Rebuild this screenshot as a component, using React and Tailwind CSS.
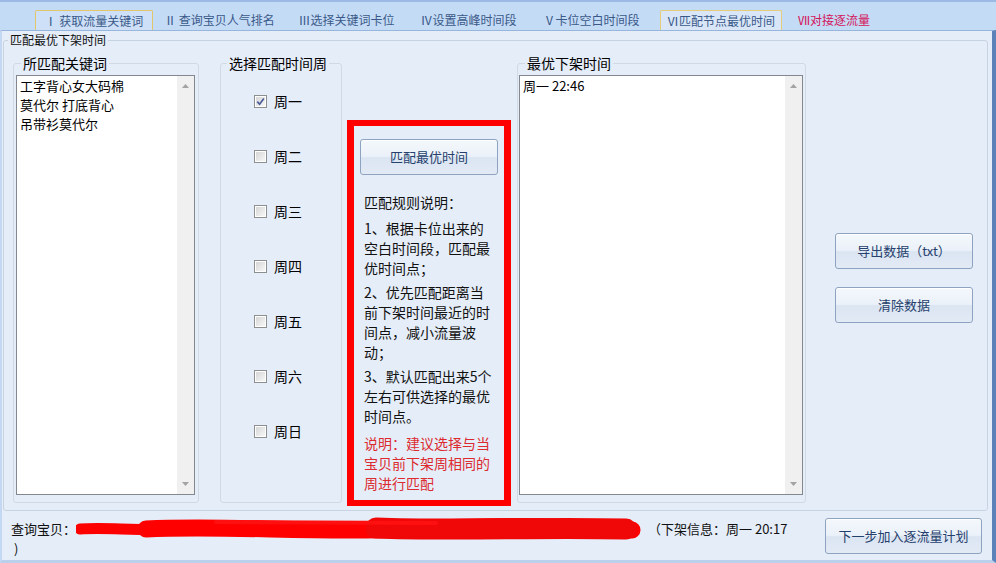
import React from 'react';

const TABS = [
  { label: 'Ⅰ 获取流量关键词', cls: 'w-[118px] border border-b-0 border-[#e2c66c] bg-[#cde0f7] rounded-t-[2px]' },
  { label: 'Ⅱ 查询宝贝人气排名', cls: 'w-[133px]' },
  { label: 'Ⅲ选择关键词卡位', cls: 'w-[121px]' },
  { label: 'Ⅳ设置高峰时间段', cls: 'w-[123px]' },
  { label: 'Ⅴ卡位空白时间段', cls: 'w-[123px]' },
  { label: 'Ⅵ匹配节点最优时间', cls: 'ml-[7px] w-[122px] border border-b-0 border-[#e4cc78] bg-[#d8e6f8] rounded-t-[2px]' },
  { label: 'Ⅶ对接逐流量', cls: 'w-[110px] justify-start pl-[16px] text-[#d3145a]' },
];

const DAYS = ['周一', '周二', '周三', '周四', '周五', '周六', '周日'];

function WinButton({ children, className = '' }) {
  return (
    <button className={`shrink-0 flex items-center justify-center rounded-[3px] border border-[#8ea3bf] bg-[linear-gradient(to_bottom,#f4f8fc_0%,#ebf1f9_48%,#dbe5f2_52%,#e2eaf5_100%)] shadow-[inset_0_1px_0_#ffffff] text-[13px] text-[#25406c] ${className}`}>
      {children}
    </button>
  );
}

function Scrollbar() {
  return (
    <div className="w-[17px] h-full bg-[#f0f0f0] flex flex-col items-center justify-between py-[8px]">
      <svg width="7" height="4" viewBox="0 0 7 4"><path d="M0 4 L3.5 0 L7 4 Z" fill="#a3a3a3" /></svg>
      <svg width="7" height="4" viewBox="0 0 7 4"><path d="M0 0 L3.5 4 L7 0 Z" fill="#a3a3a3" /></svg>
    </div>
  );
}

function ListBox({ items, className = '' }) {
  return (
    <div className={`mt-[5px] h-[420px] border border-[#828790] bg-white flex ${className}`}>
      <div className="flex-1 pl-[3px] text-[13px] leading-[19px] text-black">
        {items.map((t) => (
          <div key={t}>{t}</div>
        ))}
      </div>
      <Scrollbar />
    </div>
  );
}

function CheckBox({ checked }) {
  return (
    <span className="w-[13px] h-[13px] border border-[#8e8f8f] bg-white p-[1px] flex">
      <span className="flex-1 flex items-center justify-center bg-[linear-gradient(135deg,#d6d6d6,#f7f7f7)]">
        {checked && (
          <svg width="9" height="9" viewBox="0 0 9 9">
            <path d="M1.3 4.6 L3.6 7.2 L7.8 1.4" fill="none" stroke="#4a5d9a" strokeWidth="1.7" />
          </svg>
        )}
      </span>
    </span>
  );
}

export default function App() {
  return (
    <div className="w-[996px] h-[563px] overflow-hidden flex flex-col bg-[#c4dbf6] font-['Microsoft_YaHei','Noto_Sans_CJK_SC','Noto_Sans',sans-serif] text-black">
      <div className="shrink-0 h-[2px] bg-[#9bb9e2]" />

      {/* tab strip */}
      <div className="shrink-0 h-[28px] flex items-end pl-[35px]">
        {TABS.map((t) => (
          <div key={t.label} className={`h-[20px] flex items-center justify-center text-[12px] leading-[20px] text-[#3a5988] whitespace-nowrap ${t.cls}`}>
            {t.label}
          </div>
        ))}
      </div>

      {/* panel */}
      <div className="flex-1 min-h-0 flex flex-col bg-[#e5edf8] border-t border-t-[#98b5dc] border-l-2 border-l-[#c4d8f1] border-r-4 border-r-[#5d82b9] border-b-[3px] border-b-[#bad0ec]">
        <fieldset className="shrink-0 ml-[1px] mt-[2px] w-[985px] h-[478px] border border-[#c8d3e1] rounded-[3px]">
          <legend className="ml-[4px] px-[2px] text-[12px] leading-[14px] text-[#111]">匹配最优下架时间</legend>

          <div className="flex items-start ml-[9px] mt-[9px]">
            {/* keywords */}
            <fieldset className="w-[186px] h-[447px] border border-[#d0d9e4] rounded-[3px] pl-[2px]">
              <legend className="ml-[5px] px-[2px] text-[14px] leading-[14px]">所匹配关键词</legend>
              <ListBox className="w-[179px]" items={['工字背心女大码棉', '莫代尔 打底背心', '吊带衫莫代尔']} />
            </fieldset>

            {/* weekdays */}
            <fieldset className="ml-[21px] w-[122px] h-[447px] border border-[#d0d9e4] rounded-[3px]">
              <legend className="ml-[6px] px-[2px] text-[14px] leading-[14px]">选择匹配时间周</legend>
              <div className="pl-[33px] pt-[21px] flex flex-col gap-[35px]">
                {DAYS.map((d, i) => (
                  <label key={d} className="h-[20px] flex items-center gap-[7px] text-[14px] leading-[20px]">
                    <CheckBox checked={i === 0} />
                    <span>{d}</span>
                  </label>
                ))}
              </div>
            </fieldset>

            {/* rules box */}
            <div className="ml-[5px] mt-[64px] w-[164px] h-[386px] border-x-[7px] border-y-[6px] border-[#ff0000] flex flex-col">
              <WinButton className="ml-[6px] mt-[13px] w-[138px] h-[36px]">匹配最优时间</WinButton>
              <div className="pl-[10px] mt-[17px] text-[14px] leading-[20px] text-[#111] whitespace-nowrap">
                <div>匹配规则说明：</div>
                <div className="mt-[6px]">1、根据卡位出来的<br />空白时间段，匹配最<br />优时间点；</div>
                <div className="mt-[4px]">2、优先匹配距离当<br />前下架时间最近的时<br />间点，减小流量波<br />动；</div>
                <div className="mt-[4px]">3、默认匹配出来5个<br />左右可供选择的最优<br />时间点。</div>
                <div className="mt-[7px] text-[#dc2a2f]">说明：建议选择与当<br />宝贝前下架周相同的<br />周进行匹配</div>
              </div>
            </div>

            {/* result */}
            <fieldset className="ml-[6px] w-[289px] h-[447px] border border-[#d0d9e4] rounded-[3px] pl-[1px]">
              <legend className="ml-[6px] px-[2px] text-[14px] leading-[14px]">最优下架时间</legend>
              <ListBox className="w-[284px]" items={['周一 22:46']} />
            </fieldset>

            <div className="ml-[29px] mt-[177px] flex flex-col gap-[18px]">
              <WinButton className="w-[138px] h-[36px]">导出数据（txt）</WinButton>
              <WinButton className="w-[138px] h-[36px]">清除数据</WinButton>
            </div>
          </div>
        </fieldset>

        {/* footer */}
        <div className="shrink-0 mt-[8px] flex items-start">
          <div className="w-[823px] pl-[9px] text-[13px] leading-[20px] text-[#111]">
            <div className="flex items-center whitespace-nowrap">
              <span>查询宝贝：</span>
              <svg width="566" height="26" viewBox="0 0 566 26" className="shrink-0 -my-[3px]">
                <path d="M4 13 C 30 11, 60 15, 110 13" fill="none" stroke="#ff0000" strokeWidth="11" strokeLinecap="round" />
                <path d="M70 13 C 150 9, 240 17, 330 13 S 470 10, 556 14" fill="none" stroke="#ff0000" strokeWidth="17" strokeLinecap="round" />
                <path d="M300 12 C 380 15, 460 11, 550 13" fill="none" stroke="#f00808" strokeWidth="21" strokeLinecap="round" />
                <path d="M140 6 L 360 7" fill="none" stroke="#ff1010" strokeWidth="4" strokeLinecap="round" />
              </svg>
              <span className="ml-[6px]">（下架信息：周一 20:17</span>
            </div>
            <div className="pl-[3px]">)</div>
          </div>
          <WinButton className="-mt-[1px] w-[157px] h-[36px]">下一步加入逐流量计划</WinButton>
        </div>
      </div>
    </div>
  );
}
